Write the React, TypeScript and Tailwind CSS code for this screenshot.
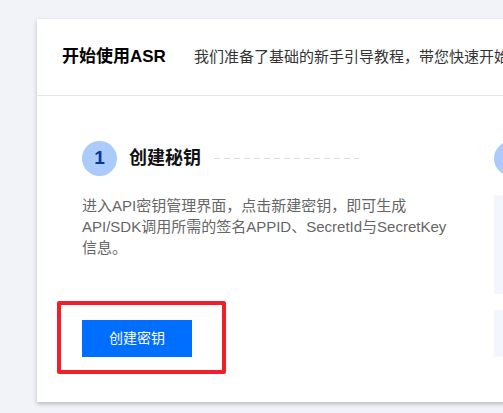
import React from 'react'

const font = { fontFamily: '"Liberation Sans", "Noto Sans CJK SC", sans-serif' }

export default function App() {
  return (
    <div className="h-[413px] w-[503px] overflow-hidden bg-[#f2f3f8] pt-[19px] pl-[37px]" style={font}>
      {/* Card */}
      <div className="w-[640px] bg-white shadow-[0_2px_4px_rgba(54,58,80,0.3)]">
        {/* Header */}
        <div className="flex h-[77px] items-center border-b border-[#e5e6eb] pl-[25px]">
          <h1 className="text-[17px] font-bold text-black">开始使用ASR</h1>
          <p className="ml-[28px] whitespace-nowrap text-[15px] text-[#333]">
            我们准备了基础的新手引导教程，带您快速开始使用ASR服务
          </p>
        </div>

        {/* Steps */}
        <div className="flex pt-[45px] pb-[28px] pl-[45px]">
          {/* Step 1 */}
          <div className="w-[412px] shrink-0">
            <div className="flex items-center">
              <div className="flex h-[35px] w-[35px] items-center justify-center rounded-full bg-[#aacbfb] text-[19px] font-bold text-[#0a3693]">
                1
              </div>
              <span className="ml-[12px] text-[18px] font-bold text-[#111]">创建秘钥</span>
              <div className="ml-[13px] h-px w-[145px] bg-[repeating-linear-gradient(90deg,#dcdde2_0_6px,transparent_6px_10px)]" />
            </div>
            <p className="mt-[19px] text-[15px] leading-[21px] text-[#666]">
              进入API密钥管理界面，点击新建密钥，即可生成
              <br />
              API/SDK调用所需的签名APPID、SecretId与SecretKey
              <br />
              信息。
            </p>
            <div className="mt-[43px] -ml-[25px] inline-block rounded-[2px] border-4 border-[#f01f2b] pt-[15px] pr-[30px] pb-[13px] pl-[21px]">
              <button className="flex h-[37px] w-[110px] items-center justify-center bg-[#006eff] text-[14px] text-white">
                创建密钥
              </button>
            </div>
          </div>

          {/* Step 2 (cut off) */}
          <div className="w-[200px] shrink-0">
            <div className="flex h-[35px] w-[35px] items-center justify-center rounded-full bg-[#aacbfb] text-[19px] font-bold text-[#0a3693]">
              2
            </div>
            <div className="mt-[19px] h-[99px] bg-[#f3f6fd]" />
            <div className="mt-[16px] h-[47px] bg-[#f3f6fd]" />
          </div>
        </div>
      </div>
    </div>
  )
}
